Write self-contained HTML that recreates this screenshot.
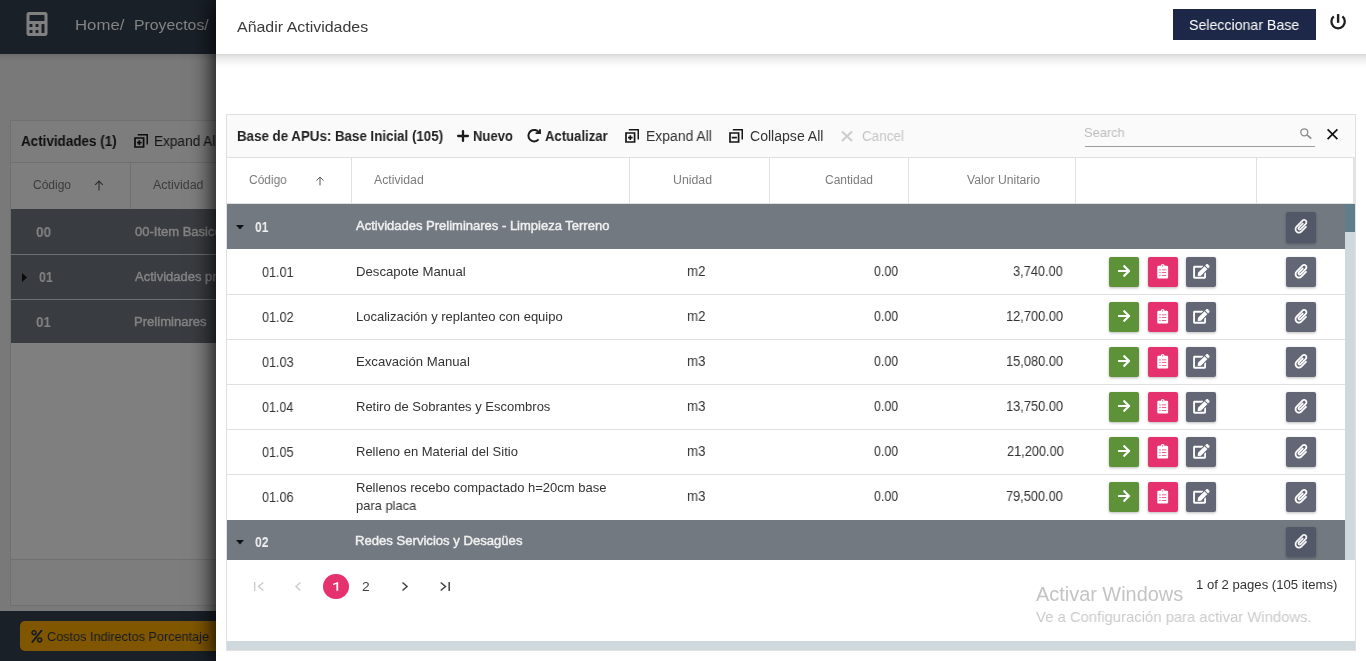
<!DOCTYPE html>
<html lang="es"><head><meta charset="utf-8"><title>Añadir Actividades</title>
<style>
html,body{margin:0;padding:0}
body{width:1366px;height:661px;overflow:hidden;position:relative;background:#797979;font-family:"Liberation Sans",sans-serif}
div,span,svg{position:absolute;box-sizing:border-box}
.t{white-space:nowrap;height:20px;line-height:20px;transform-origin:0 50%;will-change:transform}
.fb{-webkit-text-stroke:0.45px currentColor}
.ic{overflow:visible}
.btn{width:30px;height:30px;border-radius:2px;box-shadow:0 1px 3px rgba(0,0,0,.28)}
.hl{height:1px;background:#e0e0e0}
.vl{width:1px;background:#e0e0e0}
</style></head><body>

<div style="left:0;top:0;width:1366px;height:54px;background:#1a2028"></div>
<div style="left:0;top:54px;width:1366px;height:7px;background:linear-gradient(rgba(0,0,0,.10),rgba(0,0,0,0))"></div>
<svg class="ic" style="left:25.9px;top:12px;width:22px;height:24px;" viewBox="0 0 448 512" preserveAspectRatio="xMidYMid meet"><path fill="#808080" d="M400 0H48C22.4 0 0 22.4 0 48v416c0 25.6 22.4 48 48 48h352c25.6 0 48-22.4 48-48V48c0-25.600-22.400-48-48-48zM128 435.200c0 6.400-6.400 12.800-12.800 12.800H76.800c-6.400 0-12.800-6.400-12.800-12.800v-38.400c0-6.400 6.400-12.800 12.800-12.800h38.400c6.400 0 12.800 6.400 12.800 12.800v38.400zm0-128c0 6.400-6.400 12.800-12.800 12.800H76.800c-6.400 0-12.800-6.400-12.800-12.800v-38.400c0-6.400 6.400-12.800 12.800-12.800h38.400c6.400 0 12.800 6.400 12.800 12.800v38.400zm128 128c0 6.400-6.400 12.800-12.800 12.800h-38.400c-6.400 0-12.800-6.400-12.800-12.800v-38.400c0-6.400 6.400-12.800 12.800-12.800h38.400c6.400 0 12.800 6.400 12.800 12.800v38.400zm0-128c0 6.400-6.400 12.800-12.800 12.800h-38.400c-6.400 0-12.800-6.400-12.800-12.800v-38.400c0-6.400 6.400-12.800 12.800-12.800h38.400c6.400 0 12.800 6.400 12.800 12.800v38.400zm128 128c0 6.400-6.400 12.800-12.800 12.800h-38.400c-6.400 0-12.800-6.400-12.800-12.800V268.800c0-6.400 6.400-12.800 12.800-12.800h38.400c6.400 0 12.800 6.400 12.800 12.800v166.400zm0-256c0 6.400-6.400 12.800-12.800 12.800H76.800c-6.400 0-12.800-6.400-12.800-12.800V76.800C64 70.400 70.400 64 76.800 64h294.400c6.400 0 12.800 6.400 12.800 12.800v102.400z"/></svg>
<div style="left:10px;top:120px;width:400px;height:486px;background:#7d7d7d;border:1px solid #707070"></div>
<div style="left:11px;top:162px;width:400px;height:1px;background:#707070"></div>
<div style="left:11px;top:163px;width:400px;height:46px;background:#7e7e7e"></div>
<div style="left:130px;top:163px;width:1px;height:46px;background:#707070"></div>
<div style="left:11px;top:209px;width:400px;height:134px;background:#393c40"></div>
<div style="left:11px;top:254px;width:400px;height:1px;background:#6d6f72"></div>
<div style="left:11px;top:299px;width:400px;height:1px;background:#6d6f72"></div>
<div style="left:11px;top:343px;width:400px;height:216px;background:#7f7f7f"></div>
<div style="left:11px;top:559px;width:400px;height:1px;background:#707070"></div>
<div style="left:11px;top:560px;width:400px;height:45px;background:#7d7d7d"></div>
<svg class="ic" style="left:133.7px;top:134px;width:14px;height:14px" viewBox="0 0 14 14"><path fill="none" stroke="#0c0c0c" stroke-width="1.700" d="M1 4h8.600v9h-8.600z"/><path fill="none" stroke="#0c0c0c" stroke-width="1.500" d="M3.800 0.750H13.250V10.400"/><path fill="none" stroke="#0c0c0c" stroke-width="1.700" d="M3 8.600h4.600M5.300 6.300v4.600"/></svg>
<svg class="ic" style="left:93.5px;top:180px;width:10px;height:11px" viewBox="0 0 10 11"><path fill="none" stroke="#2e2e2e" stroke-width="1.1" d="M5 10.5V1M1.2 4.8L5 1l3.800 3.800"/></svg>
<svg class="ic" style="left:21.5px;top:273px;width:5px;height:9px" viewBox="0 0 5 9"><path fill="#0a0a0a" d="M0 0l5 4.500L0 9z"/></svg>
<div style="left:0;top:611px;width:1366px;height:50px;background:#1a2028"></div>
<div style="left:20px;top:621px;width:260px;height:30px;background:#805700;border-radius:5px"></div>
<svg class="ic" style="left:31.0px;top:629.5px;width:11.7px;height:12.8px;" viewBox="0 0 448 512" preserveAspectRatio="xMidYMid meet"><path fill="#161c26" d="M112 224c61.900 0 112-50.100 112-112S173.900 0 112 0 0 50.100 0 112s50.100 112 112 112zm0-160c26.500 0 48 21.500 48 48s-21.500 48-48 48-48-21.500-48-48 21.500-48 48-48zm224 224c-61.900 0-112 50.100-112 112s50.100 112 112 112 112-50.100 112-112-50.100-112-112-112zm0 160c-26.500 0-48-21.500-48-48s21.500-48 48-48 48 21.500 48 48-21.500 48-48 48zM392.300.2l31.600-.1c19.400-.1 30.900 21.800 19.700 37.800L77.400 501.600a23.950 23.950 0 0 1-19.600 10.200l-33.400.1c-19.500 0-30.900-21.900-19.700-37.800l368-463.700C377.200 4 384.500.2 392.300.2z"/></svg>
<span class="t" style="left:74.62px;top:15.3px;font-size:15px;color:#838383;transform:scaleX(1.1177)">Home/</span>
<span class="t" style="left:134.10px;top:15.3px;font-size:15px;color:#838383;transform:scaleX(1.0540)">Proyectos/</span>
<span class="t" style="left:21.16px;top:131.2px;font-size:14px;color:#0f0f10;font-weight:700;transform:scaleX(0.9600)">Actividades (1)</span>
<span class="t" style="left:154.48px;top:131.2px;font-size:14px;color:#141414;transform:scaleX(0.9730)">Expand All</span>
<span class="t" style="left:32.51px;top:175.0px;font-size:12px;color:#3c3c3c">Código</span>
<span class="t" style="left:152.87px;top:175.0px;font-size:12px;color:#3c3c3c;transform:scaleX(1.0366)">Actividad</span>
<span class="t" style="left:35.90px;top:222.0px;font-size:14px;color:#838383;font-weight:700;transform:scaleX(0.9667)">00</span>
<span class="t fb" style="left:135.09px;top:221.5px;font-size:13px;color:#838383">00-Item Basico</span>
<span class="t" style="left:39.14px;top:267.0px;font-size:14px;color:#838383;font-weight:700;transform:scaleX(0.8877)">01</span>
<span class="t fb" style="left:135.30px;top:266.5px;font-size:13px;color:#838383">Actividades preliminares</span>
<span class="t" style="left:35.91px;top:312.0px;font-size:14px;color:#838383;font-weight:700;transform:scaleX(0.9560)">01</span>
<span class="t fb" style="left:134.48px;top:311.5px;font-size:13px;color:#838383;transform:scaleX(1.0049)">Preliminares</span>
<span class="t" style="left:46.86px;top:626.5px;font-size:13px;color:#161c26;transform:scaleX(0.9749)">Costos Indirectos Porcentaje</span>
<div style="left:216px;top:0;width:1150px;height:661px;background:#fff;box-shadow:0 0 22px 2px rgba(0,0,0,.95)"></div>
<div style="left:216px;top:54px;width:1150px;height:14px;background:linear-gradient(#d9d9d9,#e5e5e5 18%,#f2f2f2 48%,#fbfbfb 78%,#fff)"></div>
<div style="left:1173px;top:9px;width:143px;height:31px;background:#1d2747"></div>
<svg class="ic" style="left:1330px;top:14px;width:16px;height:16px" viewBox="0 0 16 16"><path fill="none" stroke="#1e1e1e" stroke-width="2.250" d="M3.790 2.470A6.700 6.700 0 1 0 12.410 2.470"/><path fill="none" stroke="#1e1e1e" stroke-width="2.400" d="M8.100 0.100V8.850"/></svg>
<div style="left:226px;top:114px;width:1130px;height:537px;border:1px solid #e0e0e0;background:#fff"></div>
<div style="left:227px;top:115px;width:1128px;height:42px;background:#fafafa"></div>
<div class="hl" style="left:227px;top:157px;width:1128px"></div>
<div class="hl" style="left:227px;top:203px;width:1128px"></div>
<div style="left:1353px;top:158px;width:3px;height:45px;background:#e3e3e3"></div>
<div class="vl" style="left:351px;top:158px;height:45px"></div>
<div class="vl" style="left:629px;top:158px;height:45px"></div>
<div class="vl" style="left:769px;top:158px;height:45px"></div>
<div class="vl" style="left:908px;top:158px;height:45px"></div>
<div class="vl" style="left:1075px;top:158px;height:45px"></div>
<div class="vl" style="left:1256px;top:158px;height:45px"></div>
<div style="left:227px;top:204px;width:1118px;height:45px;background:#727981"></div>
<div style="left:227px;top:520px;width:1118px;height:40px;background:#727981;overflow:hidden"><div class="btn" style="left:1059px;top:7px;background:#525868"></div></div>
<div class="hl" style="left:227px;top:294px;width:1118px"></div>
<div class="hl" style="left:227px;top:339px;width:1118px"></div>
<div class="hl" style="left:227px;top:384px;width:1118px"></div>
<div class="hl" style="left:227px;top:429px;width:1118px"></div>
<div class="hl" style="left:227px;top:474px;width:1118px"></div>
<div style="left:1345px;top:204px;width:10px;height:356px;background:#cfd8dc"></div>
<div style="left:1345px;top:204px;width:10px;height:28px;background:#607d8b"></div>
<div style="left:227px;top:641px;width:1128px;height:9px;background:#cfd8dc"></div>
<svg class="ic" style="left:236px;top:224.5px;width:8px;height:4.500px" viewBox="0 0 8 4.5"><path fill="#111" d="M0 0h8L4 4.500z"/></svg>
<svg class="ic" style="left:236px;top:539.5px;width:8px;height:4.500px" viewBox="0 0 8 4.5"><path fill="#111" d="M0 0h8L4 4.500z"/></svg>
<svg class="ic" style="left:457px;top:130px;width:12px;height:12px" viewBox="0 0 12 12"><path fill="none" stroke="#1c1c1c" stroke-width="2.300" stroke-linecap="round" d="M6 1.100v9.800M1.100 6h9.800"/></svg>
<svg class="ic" style="left:527px;top:129px;width:14px;height:14px" viewBox="0 0 14 14"><path fill="none" stroke="#1c1c1c" stroke-width="2" d="M12.130 3.830A5.750 5.750 0 1 0 11.550 10.400"/><path fill="none" stroke="#1c1c1c" stroke-width="1.900" d="M8.600 4.100H13V0.300"/></svg>
<svg class="ic" style="left:625px;top:129px;width:14px;height:14px" viewBox="0 0 14 14"><path fill="none" stroke="#161616" stroke-width="1.700" d="M1 4h8.600v9h-8.600z"/><path fill="none" stroke="#161616" stroke-width="1.500" d="M3.800 0.750H13.250V10.400"/><path fill="none" stroke="#161616" stroke-width="1.700" d="M3 8.600h4.600M5.300 6.300v4.600"/></svg>
<svg class="ic" style="left:729px;top:129px;width:14px;height:14px" viewBox="0 0 14 14"><path fill="none" stroke="#161616" stroke-width="1.700" d="M1 4h8.600v9h-8.600z"/><path fill="none" stroke="#161616" stroke-width="1.500" d="M3.800 0.750H13.250V10.400"/><path fill="none" stroke="#161616" stroke-width="1.700" d="M2.700 8.600h5.200"/></svg>
<svg class="ic" style="left:840.5px;top:131px;width:12px;height:10.500px" viewBox="0 0 12 10.5"><path fill="none" stroke="#cdcdcd" stroke-width="2.200" d="M0.900 0.500l10.200 9.500M11.100 0.500L0.900 10"/></svg>
<div style="left:1085px;top:146px;width:230px;height:1px;background:#9e9e9e"></div>
<svg class="ic" style="left:1299.500px;top:127.500px;width:12px;height:11px" viewBox="0 0 12 11"><circle cx="4.300" cy="4.300" r="3.500" fill="none" stroke="#8a8a8a" stroke-width="1.300"/><path stroke="#8a8a8a" stroke-width="1.500" d="M6.900 6.900L11.300 10.600"/></svg>
<svg class="ic" style="left:1326.500px;top:129px;width:11px;height:10.500px" viewBox="0 0 11 10.5"><path fill="none" stroke="#111" stroke-width="1.700" d="M0.600 0.400l9.800 9.700M10.400 0.400L0.600 10.100"/></svg>
<svg class="ic" style="left:314.500px;top:176.200px;width:10px;height:10px" viewBox="0 0 10 10"><path fill="none" stroke="#5a5a5a" stroke-width="1" d="M5 9.400V1M1.500 4.500L5 1l3.500 3.500"/></svg>
<div class="btn" style="left:1286px;top:212px;height:30.500px;background:#525868"></div>
<svg class="ic" style="left:1294.2px;top:218.8px;width:14px;height:14.5px;" viewBox="0 0 448 512" preserveAspectRatio="xMidYMid meet"><path fill="#f4f4f4" d="M43.246 466.142c-58.430-60.289-57.341-157.511 1.386-217.581L254.392 34c44.316-45.332 116.351-45.336 160.671 0 43.890 44.894 43.943 117.329 0 162.276L232.214 383.128c-29.855 30.537-78.633 30.111-107.982-.998-28.275-29.970-27.368-77.473 1.452-106.953l143.743-146.835c6.182-6.314 16.312-6.422 22.626-.241l22.861 22.379c6.315 6.182 6.422 16.312.241 22.626L171.427 319.927c-4.932 5.045-5.236 13.428-.648 18.292 4.372 4.634 11.245 4.711 15.688.165l182.849-186.851c19.613-20.062 19.613-52.725-.011-72.798-19.189-19.627-49.957-19.637-69.154 0L90.390 293.295c-34.763 35.560-35.299 93.120-1.191 128.313 34.010 35.093 88.985 35.137 123.058.286l172.060-175.999c6.177-6.319 16.307-6.433 22.626-.256l22.877 22.364c6.319 6.177 6.434 16.307.256 22.626l-172.060 175.998c-59.576 60.938-155.943 60.216-214.770-.485z"/></svg>
<svg class="ic" style="left:1294.2px;top:533.8px;width:14px;height:14.5px;" viewBox="0 0 448 512" preserveAspectRatio="xMidYMid meet"><path fill="#f4f4f4" d="M43.246 466.142c-58.430-60.289-57.341-157.511 1.386-217.581L254.392 34c44.316-45.332 116.351-45.336 160.671 0 43.890 44.894 43.943 117.329 0 162.276L232.214 383.128c-29.855 30.537-78.633 30.111-107.982-.998-28.275-29.970-27.368-77.473 1.452-106.953l143.743-146.835c6.182-6.314 16.312-6.422 22.626-.241l22.861 22.379c6.315 6.182 6.422 16.312.241 22.626L171.427 319.927c-4.932 5.045-5.236 13.428-.648 18.292 4.372 4.634 11.245 4.711 15.688.165l182.849-186.851c19.613-20.062 19.613-52.725-.011-72.798-19.189-19.627-49.957-19.637-69.154 0L90.390 293.295c-34.763 35.560-35.299 93.120-1.191 128.313 34.010 35.093 88.985 35.137 123.058.286l172.060-175.999c6.177-6.319 16.307-6.433 22.626-.256l22.877 22.364c6.319 6.177 6.434 16.307.256 22.626l-172.060 175.998c-59.576 60.938-155.943 60.216-214.770-.485z"/></svg>
<div class="btn" style="left:1109px;top:257px;background:#5d9239"></div>
<svg class="ic" style="left:1117.85px;top:263.8px;width:12.3px;height:14px;" viewBox="0 0 448 512" preserveAspectRatio="xMidYMid meet"><path fill="#fff" d="M190.5 66.9l22.2-22.2c9.4-9.4 24.6-9.4 33.900 0L441 239c9.400 9.400 9.400 24.600 0 33.900L246.600 467.300c-9.400 9.400-24.600 9.400-33.900 0l-22.200-22.200c-9.500-9.500-9.300-25 .4-34.300L311.400 296H24c-13.300 0-24-10.700-24-24v-32c0-13.300 10.700-24 24-24h287.400L190.900 101.200c-9.800-9.300-10-24.800-.4-34.300z"/></svg>
<div class="btn" style="left:1148px;top:257px;background:#e6316f"></div>
<svg class="ic" style="left:1157.2px;top:263.6px;width:11.4px;height:14.5px;" viewBox="0 0 384 512" preserveAspectRatio="xMidYMid meet"><path fill="#fff" d="M336 64h-80c0-35.300-28.700-64-64-64s-64 28.700-64 64H48C21.500 64 0 85.500 0 112v352c0 26.500 21.500 48 48 48h288c26.500 0 48-21.500 48-48V112c0-26.500-21.500-48-48-48zM96 424c-13.300 0-24-10.700-24-24s10.700-24 24-24 24 10.700 24 24-10.700 24-24 24zm0-96c-13.300 0-24-10.700-24-24s10.700-24 24-24 24 10.700 24 24-10.700 24-24 24zm0-96c-13.300 0-24-10.700-24-24s10.700-24 24-24 24 10.700 24 24-10.700 24-24 24zm96-192c13.300 0 24 10.700 24 24s-10.700 24-24 24-24-10.700-24-24 10.700-24 24-24zm128 368c0 4.400-3.600 8-8 8H168c-4.400 0-8-3.600-8-8v-16c0-4.400 3.600-8 8-8h144c4.400 0 8 3.600 8 8v16zm0-96c0 4.400-3.600 8-8 8H168c-4.400 0-8-3.600-8-8v-16c0-4.400 3.600-8 8-8h144c4.400 0 8 3.600 8 8v16zm0-96c0 4.400-3.600 8-8 8H168c-4.400 0-8-3.600-8-8v-16c0-4.400 3.600-8 8-8h144c4.400 0 8 3.600 8 8v16z"/></svg>
<div class="btn" style="left:1186px;top:257px;background:#636775"></div>
<svg class="ic" style="left:1193.2px;top:263.6px;width:16.8px;height:14.7px;" viewBox="0 0 576 512" preserveAspectRatio="xMidYMid meet"><path fill="#fff" d="M402.6 83.2l90.2 90.2c3.800 3.800 3.800 10 0 13.800L274.400 405.600l-92.800 10.300c-12.400 1.400-22.900-9.100-21.500-21.500l10.300-92.800L388.800 83.200c3.800-3.800 10-3.800 13.800 0zm162-22.900l-48.800-48.800c-15.200-15.200-39.900-15.200-55.200 0l-35.400 35.400c-3.800 3.800-3.800 10 0 13.800l90.200 90.200c3.800 3.800 10 3.800 13.800 0l35.400-35.400c15.200-15.300 15.200-40 0-55.200zM384 346.200V448H64V128h229.800c3.200 0 6.200-1.300 8.500-3.500l40-40c7.600-7.600 2.200-20.500-8.500-20.500H48C21.500 64 0 85.500 0 112v352c0 26.500 21.500 48 48 48h352c26.500 0 48-21.500 48-48V306.200c0-10.700-12.900-16-20.500-8.500l-40 40c-2.200 2.300-3.500 5.300-3.500 8.500z"/></svg>
<div class="btn" style="left:1286px;top:257px;background:#636775"></div>
<svg class="ic" style="left:1294.2px;top:263.6px;width:14px;height:14.5px;" viewBox="0 0 448 512" preserveAspectRatio="xMidYMid meet"><path fill="#fff" d="M43.246 466.142c-58.430-60.289-57.341-157.511 1.386-217.581L254.392 34c44.316-45.332 116.351-45.336 160.671 0 43.890 44.894 43.943 117.329 0 162.276L232.214 383.128c-29.855 30.537-78.633 30.111-107.982-.998-28.275-29.970-27.368-77.473 1.452-106.953l143.743-146.835c6.182-6.314 16.312-6.422 22.626-.241l22.861 22.379c6.315 6.182 6.422 16.312.241 22.626L171.427 319.927c-4.932 5.045-5.236 13.428-.648 18.292 4.372 4.634 11.245 4.711 15.688.165l182.849-186.851c19.613-20.062 19.613-52.725-.011-72.798-19.189-19.627-49.957-19.637-69.154 0L90.390 293.295c-34.763 35.560-35.299 93.120-1.191 128.313 34.010 35.093 88.985 35.137 123.058.286l172.060-175.999c6.177-6.319 16.307-6.433 22.626-.256l22.877 22.364c6.319 6.177 6.434 16.307.256 22.626l-172.060 175.998c-59.576 60.938-155.943 60.216-214.770-.485z"/></svg>
<div class="btn" style="left:1109px;top:302px;background:#5d9239"></div>
<svg class="ic" style="left:1117.85px;top:308.8px;width:12.3px;height:14px;" viewBox="0 0 448 512" preserveAspectRatio="xMidYMid meet"><path fill="#fff" d="M190.5 66.9l22.2-22.2c9.4-9.4 24.6-9.4 33.900 0L441 239c9.400 9.400 9.400 24.600 0 33.900L246.600 467.300c-9.400 9.400-24.600 9.400-33.900 0l-22.200-22.200c-9.500-9.500-9.300-25 .4-34.300L311.400 296H24c-13.300 0-24-10.700-24-24v-32c0-13.300 10.700-24 24-24h287.400L190.900 101.200c-9.800-9.300-10-24.800-.4-34.300z"/></svg>
<div class="btn" style="left:1148px;top:302px;background:#e6316f"></div>
<svg class="ic" style="left:1157.2px;top:308.6px;width:11.4px;height:14.5px;" viewBox="0 0 384 512" preserveAspectRatio="xMidYMid meet"><path fill="#fff" d="M336 64h-80c0-35.300-28.700-64-64-64s-64 28.700-64 64H48C21.500 64 0 85.500 0 112v352c0 26.500 21.500 48 48 48h288c26.500 0 48-21.500 48-48V112c0-26.500-21.500-48-48-48zM96 424c-13.300 0-24-10.700-24-24s10.700-24 24-24 24 10.700 24 24-10.700 24-24 24zm0-96c-13.300 0-24-10.700-24-24s10.700-24 24-24 24 10.700 24 24-10.700 24-24 24zm0-96c-13.300 0-24-10.700-24-24s10.700-24 24-24 24 10.700 24 24-10.700 24-24 24zm96-192c13.300 0 24 10.700 24 24s-10.700 24-24 24-24-10.700-24-24 10.700-24 24-24zm128 368c0 4.400-3.600 8-8 8H168c-4.400 0-8-3.600-8-8v-16c0-4.400 3.600-8 8-8h144c4.400 0 8 3.600 8 8v16zm0-96c0 4.400-3.600 8-8 8H168c-4.400 0-8-3.600-8-8v-16c0-4.400 3.600-8 8-8h144c4.400 0 8 3.600 8 8v16zm0-96c0 4.400-3.600 8-8 8H168c-4.400 0-8-3.600-8-8v-16c0-4.400 3.600-8 8-8h144c4.400 0 8 3.600 8 8v16z"/></svg>
<div class="btn" style="left:1186px;top:302px;background:#636775"></div>
<svg class="ic" style="left:1193.2px;top:308.6px;width:16.8px;height:14.7px;" viewBox="0 0 576 512" preserveAspectRatio="xMidYMid meet"><path fill="#fff" d="M402.6 83.2l90.2 90.2c3.800 3.800 3.800 10 0 13.800L274.400 405.600l-92.800 10.300c-12.400 1.400-22.900-9.100-21.500-21.500l10.300-92.800L388.800 83.200c3.800-3.800 10-3.800 13.800 0zm162-22.900l-48.800-48.800c-15.200-15.200-39.900-15.200-55.200 0l-35.400 35.400c-3.800 3.800-3.800 10 0 13.800l90.200 90.200c3.800 3.800 10 3.800 13.800 0l35.400-35.400c15.200-15.300 15.200-40 0-55.200zM384 346.200V448H64V128h229.800c3.200 0 6.200-1.300 8.500-3.500l40-40c7.600-7.600 2.200-20.500-8.500-20.500H48C21.500 64 0 85.500 0 112v352c0 26.500 21.500 48 48 48h352c26.500 0 48-21.500 48-48V306.200c0-10.700-12.900-16-20.500-8.500l-40 40c-2.200 2.300-3.500 5.300-3.500 8.500z"/></svg>
<div class="btn" style="left:1286px;top:302px;background:#636775"></div>
<svg class="ic" style="left:1294.2px;top:308.6px;width:14px;height:14.5px;" viewBox="0 0 448 512" preserveAspectRatio="xMidYMid meet"><path fill="#fff" d="M43.246 466.142c-58.430-60.289-57.341-157.511 1.386-217.581L254.392 34c44.316-45.332 116.351-45.336 160.671 0 43.890 44.894 43.943 117.329 0 162.276L232.214 383.128c-29.855 30.537-78.633 30.111-107.982-.998-28.275-29.970-27.368-77.473 1.452-106.953l143.743-146.835c6.182-6.314 16.312-6.422 22.626-.241l22.861 22.379c6.315 6.182 6.422 16.312.241 22.626L171.427 319.927c-4.932 5.045-5.236 13.428-.648 18.292 4.372 4.634 11.245 4.711 15.688.165l182.849-186.851c19.613-20.062 19.613-52.725-.011-72.798-19.189-19.627-49.957-19.637-69.154 0L90.390 293.295c-34.763 35.560-35.299 93.120-1.191 128.313 34.010 35.093 88.985 35.137 123.058.286l172.060-175.999c6.177-6.319 16.307-6.433 22.626-.256l22.877 22.364c6.319 6.177 6.434 16.307.256 22.626l-172.060 175.998c-59.576 60.938-155.943 60.216-214.770-.485z"/></svg>
<div class="btn" style="left:1109px;top:347px;background:#5d9239"></div>
<svg class="ic" style="left:1117.85px;top:353.8px;width:12.3px;height:14px;" viewBox="0 0 448 512" preserveAspectRatio="xMidYMid meet"><path fill="#fff" d="M190.5 66.9l22.2-22.2c9.4-9.4 24.6-9.4 33.900 0L441 239c9.400 9.400 9.400 24.600 0 33.900L246.600 467.300c-9.400 9.400-24.600 9.400-33.900 0l-22.200-22.200c-9.500-9.500-9.300-25 .4-34.300L311.400 296H24c-13.300 0-24-10.700-24-24v-32c0-13.300 10.700-24 24-24h287.400L190.900 101.200c-9.800-9.300-10-24.800-.4-34.300z"/></svg>
<div class="btn" style="left:1148px;top:347px;background:#e6316f"></div>
<svg class="ic" style="left:1157.2px;top:353.6px;width:11.4px;height:14.5px;" viewBox="0 0 384 512" preserveAspectRatio="xMidYMid meet"><path fill="#fff" d="M336 64h-80c0-35.300-28.700-64-64-64s-64 28.700-64 64H48C21.500 64 0 85.500 0 112v352c0 26.500 21.500 48 48 48h288c26.500 0 48-21.500 48-48V112c0-26.500-21.500-48-48-48zM96 424c-13.300 0-24-10.700-24-24s10.700-24 24-24 24 10.700 24 24-10.700 24-24 24zm0-96c-13.300 0-24-10.700-24-24s10.700-24 24-24 24 10.700 24 24-10.700 24-24 24zm0-96c-13.300 0-24-10.700-24-24s10.700-24 24-24 24 10.700 24 24-10.700 24-24 24zm96-192c13.300 0 24 10.700 24 24s-10.700 24-24 24-24-10.700-24-24 10.700-24 24-24zm128 368c0 4.400-3.600 8-8 8H168c-4.400 0-8-3.600-8-8v-16c0-4.400 3.600-8 8-8h144c4.400 0 8 3.600 8 8v16zm0-96c0 4.400-3.600 8-8 8H168c-4.400 0-8-3.600-8-8v-16c0-4.400 3.600-8 8-8h144c4.400 0 8 3.600 8 8v16zm0-96c0 4.400-3.600 8-8 8H168c-4.400 0-8-3.600-8-8v-16c0-4.400 3.600-8 8-8h144c4.400 0 8 3.600 8 8v16z"/></svg>
<div class="btn" style="left:1186px;top:347px;background:#636775"></div>
<svg class="ic" style="left:1193.2px;top:353.6px;width:16.8px;height:14.7px;" viewBox="0 0 576 512" preserveAspectRatio="xMidYMid meet"><path fill="#fff" d="M402.6 83.2l90.2 90.2c3.800 3.800 3.800 10 0 13.800L274.400 405.600l-92.800 10.300c-12.400 1.400-22.900-9.100-21.500-21.500l10.300-92.800L388.800 83.200c3.800-3.800 10-3.800 13.800 0zm162-22.900l-48.800-48.800c-15.200-15.200-39.900-15.200-55.200 0l-35.400 35.400c-3.800 3.800-3.800 10 0 13.800l90.200 90.200c3.800 3.800 10 3.800 13.800 0l35.400-35.400c15.200-15.300 15.200-40 0-55.200zM384 346.200V448H64V128h229.800c3.200 0 6.200-1.300 8.500-3.500l40-40c7.600-7.600 2.200-20.500-8.500-20.500H48C21.500 64 0 85.500 0 112v352c0 26.500 21.500 48 48 48h352c26.500 0 48-21.500 48-48V306.200c0-10.700-12.900-16-20.500-8.500l-40 40c-2.200 2.300-3.500 5.300-3.500 8.500z"/></svg>
<div class="btn" style="left:1286px;top:347px;background:#636775"></div>
<svg class="ic" style="left:1294.2px;top:353.6px;width:14px;height:14.5px;" viewBox="0 0 448 512" preserveAspectRatio="xMidYMid meet"><path fill="#fff" d="M43.246 466.142c-58.430-60.289-57.341-157.511 1.386-217.581L254.392 34c44.316-45.332 116.351-45.336 160.671 0 43.890 44.894 43.943 117.329 0 162.276L232.214 383.128c-29.855 30.537-78.633 30.111-107.982-.998-28.275-29.970-27.368-77.473 1.452-106.953l143.743-146.835c6.182-6.314 16.312-6.422 22.626-.241l22.861 22.379c6.315 6.182 6.422 16.312.241 22.626L171.427 319.927c-4.932 5.045-5.236 13.428-.648 18.292 4.372 4.634 11.245 4.711 15.688.165l182.849-186.851c19.613-20.062 19.613-52.725-.011-72.798-19.189-19.627-49.957-19.637-69.154 0L90.390 293.295c-34.763 35.560-35.299 93.120-1.191 128.313 34.010 35.093 88.985 35.137 123.058.286l172.060-175.999c6.177-6.319 16.307-6.433 22.626-.256l22.877 22.364c6.319 6.177 6.434 16.307.256 22.626l-172.060 175.998c-59.576 60.938-155.943 60.216-214.770-.485z"/></svg>
<div class="btn" style="left:1109px;top:392px;background:#5d9239"></div>
<svg class="ic" style="left:1117.85px;top:398.8px;width:12.3px;height:14px;" viewBox="0 0 448 512" preserveAspectRatio="xMidYMid meet"><path fill="#fff" d="M190.5 66.9l22.2-22.2c9.4-9.4 24.6-9.4 33.900 0L441 239c9.400 9.400 9.400 24.600 0 33.900L246.600 467.300c-9.400 9.400-24.600 9.400-33.900 0l-22.200-22.200c-9.500-9.500-9.300-25 .4-34.300L311.400 296H24c-13.300 0-24-10.700-24-24v-32c0-13.300 10.700-24 24-24h287.400L190.900 101.200c-9.800-9.300-10-24.800-.4-34.300z"/></svg>
<div class="btn" style="left:1148px;top:392px;background:#e6316f"></div>
<svg class="ic" style="left:1157.2px;top:398.6px;width:11.4px;height:14.5px;" viewBox="0 0 384 512" preserveAspectRatio="xMidYMid meet"><path fill="#fff" d="M336 64h-80c0-35.300-28.700-64-64-64s-64 28.700-64 64H48C21.500 64 0 85.500 0 112v352c0 26.500 21.500 48 48 48h288c26.500 0 48-21.500 48-48V112c0-26.500-21.500-48-48-48zM96 424c-13.300 0-24-10.700-24-24s10.700-24 24-24 24 10.700 24 24-10.700 24-24 24zm0-96c-13.300 0-24-10.700-24-24s10.700-24 24-24 24 10.700 24 24-10.700 24-24 24zm0-96c-13.300 0-24-10.700-24-24s10.700-24 24-24 24 10.700 24 24-10.700 24-24 24zm96-192c13.300 0 24 10.700 24 24s-10.700 24-24 24-24-10.700-24-24 10.700-24 24-24zm128 368c0 4.400-3.600 8-8 8H168c-4.400 0-8-3.600-8-8v-16c0-4.400 3.600-8 8-8h144c4.400 0 8 3.600 8 8v16zm0-96c0 4.400-3.600 8-8 8H168c-4.400 0-8-3.600-8-8v-16c0-4.400 3.600-8 8-8h144c4.400 0 8 3.600 8 8v16zm0-96c0 4.400-3.600 8-8 8H168c-4.400 0-8-3.600-8-8v-16c0-4.400 3.600-8 8-8h144c4.400 0 8 3.600 8 8v16z"/></svg>
<div class="btn" style="left:1186px;top:392px;background:#636775"></div>
<svg class="ic" style="left:1193.2px;top:398.6px;width:16.8px;height:14.7px;" viewBox="0 0 576 512" preserveAspectRatio="xMidYMid meet"><path fill="#fff" d="M402.6 83.2l90.2 90.2c3.800 3.800 3.800 10 0 13.800L274.400 405.600l-92.800 10.300c-12.400 1.400-22.900-9.100-21.500-21.500l10.300-92.800L388.800 83.200c3.800-3.800 10-3.800 13.800 0zm162-22.900l-48.800-48.800c-15.200-15.200-39.900-15.200-55.200 0l-35.400 35.400c-3.800 3.800-3.800 10 0 13.800l90.200 90.200c3.800 3.800 10 3.800 13.800 0l35.400-35.400c15.200-15.300 15.200-40 0-55.200zM384 346.200V448H64V128h229.800c3.200 0 6.200-1.300 8.500-3.500l40-40c7.600-7.600 2.200-20.500-8.500-20.500H48C21.500 64 0 85.500 0 112v352c0 26.500 21.500 48 48 48h352c26.500 0 48-21.500 48-48V306.200c0-10.700-12.900-16-20.500-8.500l-40 40c-2.200 2.300-3.500 5.300-3.500 8.500z"/></svg>
<div class="btn" style="left:1286px;top:392px;background:#636775"></div>
<svg class="ic" style="left:1294.2px;top:398.6px;width:14px;height:14.5px;" viewBox="0 0 448 512" preserveAspectRatio="xMidYMid meet"><path fill="#fff" d="M43.246 466.142c-58.430-60.289-57.341-157.511 1.386-217.581L254.392 34c44.316-45.332 116.351-45.336 160.671 0 43.890 44.894 43.943 117.329 0 162.276L232.214 383.128c-29.855 30.537-78.633 30.111-107.982-.998-28.275-29.970-27.368-77.473 1.452-106.953l143.743-146.835c6.182-6.314 16.312-6.422 22.626-.241l22.861 22.379c6.315 6.182 6.422 16.312.241 22.626L171.427 319.927c-4.932 5.045-5.236 13.428-.648 18.292 4.372 4.634 11.245 4.711 15.688.165l182.849-186.851c19.613-20.062 19.613-52.725-.011-72.798-19.189-19.627-49.957-19.637-69.154 0L90.390 293.295c-34.763 35.560-35.299 93.120-1.191 128.313 34.010 35.093 88.985 35.137 123.058.286l172.060-175.999c6.177-6.319 16.307-6.433 22.626-.256l22.877 22.364c6.319 6.177 6.434 16.307.256 22.626l-172.060 175.998c-59.576 60.938-155.943 60.216-214.770-.485z"/></svg>
<div class="btn" style="left:1109px;top:437px;background:#5d9239"></div>
<svg class="ic" style="left:1117.85px;top:443.8px;width:12.3px;height:14px;" viewBox="0 0 448 512" preserveAspectRatio="xMidYMid meet"><path fill="#fff" d="M190.5 66.9l22.2-22.2c9.4-9.4 24.6-9.4 33.900 0L441 239c9.400 9.400 9.400 24.600 0 33.900L246.600 467.300c-9.400 9.400-24.600 9.400-33.900 0l-22.200-22.200c-9.500-9.500-9.300-25 .4-34.300L311.400 296H24c-13.300 0-24-10.700-24-24v-32c0-13.300 10.700-24 24-24h287.400L190.900 101.200c-9.800-9.300-10-24.800-.4-34.300z"/></svg>
<div class="btn" style="left:1148px;top:437px;background:#e6316f"></div>
<svg class="ic" style="left:1157.2px;top:443.6px;width:11.4px;height:14.5px;" viewBox="0 0 384 512" preserveAspectRatio="xMidYMid meet"><path fill="#fff" d="M336 64h-80c0-35.300-28.700-64-64-64s-64 28.700-64 64H48C21.500 64 0 85.500 0 112v352c0 26.500 21.500 48 48 48h288c26.500 0 48-21.500 48-48V112c0-26.500-21.500-48-48-48zM96 424c-13.300 0-24-10.700-24-24s10.700-24 24-24 24 10.700 24 24-10.700 24-24 24zm0-96c-13.300 0-24-10.700-24-24s10.700-24 24-24 24 10.700 24 24-10.700 24-24 24zm0-96c-13.300 0-24-10.700-24-24s10.700-24 24-24 24 10.700 24 24-10.700 24-24 24zm96-192c13.300 0 24 10.700 24 24s-10.700 24-24 24-24-10.700-24-24 10.700-24 24-24zm128 368c0 4.400-3.600 8-8 8H168c-4.400 0-8-3.600-8-8v-16c0-4.400 3.600-8 8-8h144c4.400 0 8 3.600 8 8v16zm0-96c0 4.400-3.600 8-8 8H168c-4.400 0-8-3.600-8-8v-16c0-4.400 3.600-8 8-8h144c4.400 0 8 3.600 8 8v16zm0-96c0 4.400-3.600 8-8 8H168c-4.400 0-8-3.600-8-8v-16c0-4.400 3.600-8 8-8h144c4.400 0 8 3.600 8 8v16z"/></svg>
<div class="btn" style="left:1186px;top:437px;background:#636775"></div>
<svg class="ic" style="left:1193.2px;top:443.6px;width:16.8px;height:14.7px;" viewBox="0 0 576 512" preserveAspectRatio="xMidYMid meet"><path fill="#fff" d="M402.6 83.2l90.2 90.2c3.800 3.800 3.800 10 0 13.800L274.400 405.600l-92.800 10.300c-12.400 1.400-22.900-9.100-21.500-21.500l10.300-92.800L388.800 83.200c3.800-3.800 10-3.800 13.800 0zm162-22.900l-48.800-48.800c-15.200-15.200-39.900-15.200-55.200 0l-35.400 35.400c-3.800 3.800-3.800 10 0 13.800l90.200 90.200c3.800 3.800 10 3.800 13.800 0l35.400-35.400c15.200-15.300 15.200-40 0-55.200zM384 346.200V448H64V128h229.800c3.200 0 6.200-1.300 8.500-3.500l40-40c7.600-7.600 2.200-20.500-8.500-20.500H48C21.500 64 0 85.500 0 112v352c0 26.500 21.500 48 48 48h352c26.500 0 48-21.500 48-48V306.200c0-10.700-12.900-16-20.500-8.500l-40 40c-2.200 2.300-3.500 5.300-3.500 8.500z"/></svg>
<div class="btn" style="left:1286px;top:437px;background:#636775"></div>
<svg class="ic" style="left:1294.2px;top:443.6px;width:14px;height:14.5px;" viewBox="0 0 448 512" preserveAspectRatio="xMidYMid meet"><path fill="#fff" d="M43.246 466.142c-58.430-60.289-57.341-157.511 1.386-217.581L254.392 34c44.316-45.332 116.351-45.336 160.671 0 43.890 44.894 43.943 117.329 0 162.276L232.214 383.128c-29.855 30.537-78.633 30.111-107.982-.998-28.275-29.970-27.368-77.473 1.452-106.953l143.743-146.835c6.182-6.314 16.312-6.422 22.626-.241l22.861 22.379c6.315 6.182 6.422 16.312.241 22.626L171.427 319.927c-4.932 5.045-5.236 13.428-.648 18.292 4.372 4.634 11.245 4.711 15.688.165l182.849-186.851c19.613-20.062 19.613-52.725-.011-72.798-19.189-19.627-49.957-19.637-69.154 0L90.390 293.295c-34.763 35.560-35.299 93.120-1.191 128.313 34.010 35.093 88.985 35.137 123.058.286l172.060-175.999c6.177-6.319 16.307-6.433 22.626-.256l22.877 22.364c6.319 6.177 6.434 16.307.256 22.626l-172.060 175.998c-59.576 60.938-155.943 60.216-214.770-.485z"/></svg>
<div class="btn" style="left:1109px;top:482px;background:#5d9239"></div>
<svg class="ic" style="left:1117.85px;top:488.8px;width:12.3px;height:14px;" viewBox="0 0 448 512" preserveAspectRatio="xMidYMid meet"><path fill="#fff" d="M190.5 66.9l22.2-22.2c9.4-9.4 24.6-9.4 33.900 0L441 239c9.400 9.400 9.400 24.600 0 33.900L246.600 467.300c-9.400 9.400-24.600 9.400-33.900 0l-22.200-22.200c-9.500-9.500-9.300-25 .4-34.300L311.400 296H24c-13.300 0-24-10.700-24-24v-32c0-13.300 10.700-24 24-24h287.400L190.900 101.200c-9.800-9.300-10-24.800-.4-34.300z"/></svg>
<div class="btn" style="left:1148px;top:482px;background:#e6316f"></div>
<svg class="ic" style="left:1157.2px;top:488.6px;width:11.4px;height:14.5px;" viewBox="0 0 384 512" preserveAspectRatio="xMidYMid meet"><path fill="#fff" d="M336 64h-80c0-35.300-28.700-64-64-64s-64 28.700-64 64H48C21.500 64 0 85.500 0 112v352c0 26.500 21.500 48 48 48h288c26.500 0 48-21.500 48-48V112c0-26.500-21.500-48-48-48zM96 424c-13.300 0-24-10.700-24-24s10.700-24 24-24 24 10.700 24 24-10.700 24-24 24zm0-96c-13.300 0-24-10.700-24-24s10.700-24 24-24 24 10.700 24 24-10.700 24-24 24zm0-96c-13.300 0-24-10.700-24-24s10.700-24 24-24 24 10.700 24 24-10.700 24-24 24zm96-192c13.300 0 24 10.700 24 24s-10.700 24-24 24-24-10.700-24-24 10.700-24 24-24zm128 368c0 4.400-3.600 8-8 8H168c-4.400 0-8-3.600-8-8v-16c0-4.400 3.600-8 8-8h144c4.400 0 8 3.600 8 8v16zm0-96c0 4.400-3.600 8-8 8H168c-4.400 0-8-3.600-8-8v-16c0-4.400 3.600-8 8-8h144c4.400 0 8 3.600 8 8v16zm0-96c0 4.400-3.600 8-8 8H168c-4.400 0-8-3.600-8-8v-16c0-4.400 3.600-8 8-8h144c4.400 0 8 3.600 8 8v16z"/></svg>
<div class="btn" style="left:1186px;top:482px;background:#636775"></div>
<svg class="ic" style="left:1193.2px;top:488.6px;width:16.8px;height:14.7px;" viewBox="0 0 576 512" preserveAspectRatio="xMidYMid meet"><path fill="#fff" d="M402.6 83.2l90.2 90.2c3.800 3.800 3.800 10 0 13.800L274.400 405.600l-92.800 10.300c-12.400 1.400-22.900-9.100-21.500-21.500l10.300-92.800L388.800 83.200c3.800-3.800 10-3.800 13.800 0zm162-22.900l-48.800-48.800c-15.200-15.200-39.900-15.200-55.200 0l-35.400 35.400c-3.800 3.800-3.800 10 0 13.800l90.200 90.200c3.800 3.800 10 3.800 13.800 0l35.400-35.400c15.200-15.300 15.200-40 0-55.200zM384 346.200V448H64V128h229.800c3.200 0 6.200-1.300 8.500-3.500l40-40c7.600-7.600 2.200-20.500-8.500-20.500H48C21.500 64 0 85.500 0 112v352c0 26.500 21.500 48 48 48h352c26.500 0 48-21.500 48-48V306.200c0-10.700-12.900-16-20.500-8.500l-40 40c-2.200 2.300-3.500 5.300-3.500 8.500z"/></svg>
<div class="btn" style="left:1286px;top:482px;background:#636775"></div>
<svg class="ic" style="left:1294.2px;top:488.6px;width:14px;height:14.5px;" viewBox="0 0 448 512" preserveAspectRatio="xMidYMid meet"><path fill="#fff" d="M43.246 466.142c-58.430-60.289-57.341-157.511 1.386-217.581L254.392 34c44.316-45.332 116.351-45.336 160.671 0 43.890 44.894 43.943 117.329 0 162.276L232.214 383.128c-29.855 30.537-78.633 30.111-107.982-.998-28.275-29.970-27.368-77.473 1.452-106.953l143.743-146.835c6.182-6.314 16.312-6.422 22.626-.241l22.861 22.379c6.315 6.182 6.422 16.312.241 22.626L171.427 319.927c-4.932 5.045-5.236 13.428-.648 18.292 4.372 4.634 11.245 4.711 15.688.165l182.849-186.851c19.613-20.062 19.613-52.725-.011-72.798-19.189-19.627-49.957-19.637-69.154 0L90.390 293.295c-34.763 35.560-35.299 93.120-1.191 128.313 34.010 35.093 88.985 35.137 123.058.286l172.060-175.999c6.177-6.319 16.307-6.433 22.626-.256l22.877 22.364c6.319 6.177 6.434 16.307.256 22.626l-172.060 175.998c-59.576 60.938-155.943 60.216-214.770-.485z"/></svg>
<div style="left:323px;top:573.500px;width:26px;height:25.600px;border-radius:13px;background:#e6316f"></div>
<svg class="ic" style="left:332.900px;top:582.200px;width:5.200px;height:8.800px" viewBox="0 0 5.2 8.8"><path fill="#fff" d="M5.200 0V8.800H3.400V2.050L0.100 3.200V1.700L4.950 0z"/></svg>
<svg class="ic" style="left:253.500px;top:582px;width:10px;height:9px" viewBox="0 0 10 9"><path fill="none" stroke="#c8c8c8" stroke-width="1.300" d="M0.700 0v9M9.300 0.500L4.500 4.500l4.800 4"/></svg>
<svg class="ic" style="left:294.500px;top:582px;width:6px;height:9px" viewBox="0 0 6 9"><path fill="none" stroke="#c8c8c8" stroke-width="1.300" d="M5.500 0.500L0.900 4.500l4.600 4"/></svg>
<svg class="ic" style="left:402px;top:582px;width:6px;height:9px" viewBox="0 0 6 9"><path fill="none" stroke="#444" stroke-width="1.500" d="M0.500 0.500L5.100 4.500l-4.600 4"/></svg>
<svg class="ic" style="left:439.500px;top:582px;width:10px;height:9px" viewBox="0 0 10 9"><path fill="none" stroke="#444" stroke-width="1.500" d="M9.200 0v9M0.700 0.500L5.500 4.500l-4.800 4"/></svg>
<span class="t" style="left:236.74px;top:16.9px;font-size:15px;color:#3a3a3a;transform:scaleX(1.0631)">Añadir Actividades</span>
<span class="t" style="left:1189.46px;top:14.6px;font-size:14.5px;color:#ffffff;transform:scaleX(0.9767)">Seleccionar Base</span>
<span class="t" style="left:237.05px;top:126.0px;font-size:14px;color:#212121;font-weight:700;transform:scaleX(0.9512)">Base de APUs: Base Inicial (105)</span>
<span class="t" style="left:473.07px;top:126.0px;font-size:14px;color:#212121;font-weight:700;transform:scaleX(0.9320)">Nuevo</span>
<span class="t" style="left:545.07px;top:126.0px;font-size:14px;color:#212121;font-weight:700;transform:scaleX(0.9357)">Actualizar</span>
<span class="t" style="left:646.35px;top:126.0px;font-size:14px;color:#333333;transform:scaleX(0.9947)">Expand All</span>
<span class="t" style="left:749.67px;top:126.0px;font-size:14px;color:#333333;transform:scaleX(1.0046)">Collapse All</span>
<span class="t" style="left:861.70px;top:126.0px;font-size:14px;color:#c6c6c6;transform:scaleX(0.9614)">Cancel</span>
<span class="t" style="left:1084.31px;top:122.6px;font-size:13px;color:#bdbdbd;transform:scaleX(0.9863)">Search</span>
<span class="t" style="left:248.61px;top:170.0px;font-size:12px;color:#7b7b7b;transform:scaleX(0.9932)">Código</span>
<span class="t" style="left:374.37px;top:170.0px;font-size:12px;color:#7b7b7b;transform:scaleX(1.0220)">Actividad</span>
<span class="t" style="left:673.17px;top:170.0px;font-size:12px;color:#7b7b7b;transform:scaleX(1.0267)">Unidad</span>
<span class="t" style="left:825.21px;top:170.0px;font-size:12px;color:#7b7b7b">Cantidad</span>
<span class="t" style="left:966.95px;top:170.0px;font-size:12px;color:#7b7b7b;transform:scaleX(1.0154)">Valor Unitario</span>
<span class="t" style="left:255.35px;top:217.0px;font-size:14px;color:#f0f0f0;font-weight:700;transform:scaleX(0.8604)">01</span>
<span class="t fb" style="left:356.10px;top:216.2px;font-size:13px;color:#f0f0f0">Actividades Preliminares - Limpieza Terreno</span>
<span class="t" style="left:255.35px;top:532.0px;font-size:14px;color:#f0f0f0;font-weight:700;transform:scaleX(0.8700)">02</span>
<span class="t fb" style="left:355.28px;top:531.2px;font-size:13px;color:#f0f0f0;transform:scaleX(1.0075)">Redes Servicios y Desagües</span>
<span class="t" style="left:262.41px;top:262.2px;font-size:14px;color:#333333;transform:scaleX(0.9005)">01.01</span>
<span class="t" style="left:355.89px;top:261.5px;font-size:13px;color:#333333;transform:scaleX(1.0115)">Descapote Manual</span>
<span class="t" style="left:687.05px;top:261.0px;font-size:14px;color:#333333;transform:scaleX(0.9482)">m2</span>
<span class="t" style="left:873.52px;top:261.0px;font-size:14px;color:#333333;transform:scaleX(0.8844)">0.00</span>
<span class="t" style="left:1013.49px;top:261.0px;font-size:14px;color:#333333;transform:scaleX(0.9131)">3,740.00</span>
<span class="t" style="left:262.41px;top:307.2px;font-size:14px;color:#333333;transform:scaleX(0.9015)">01.02</span>
<span class="t" style="left:355.90px;top:306.5px;font-size:13px;color:#333333">Localización y replanteo con equipo</span>
<span class="t" style="left:687.05px;top:306.0px;font-size:14px;color:#333333;transform:scaleX(0.9482)">m2</span>
<span class="t" style="left:873.52px;top:306.0px;font-size:14px;color:#333333;transform:scaleX(0.8844)">0.00</span>
<span class="t" style="left:1006.18px;top:306.0px;font-size:14px;color:#333333;transform:scaleX(0.9166)">12,700.00</span>
<span class="t" style="left:262.41px;top:352.2px;font-size:14px;color:#333333;transform:scaleX(0.9012)">01.03</span>
<span class="t" style="left:355.89px;top:351.5px;font-size:13px;color:#333333;transform:scaleX(1.0095)">Excavación Manual</span>
<span class="t" style="left:687.05px;top:351.0px;font-size:14px;color:#333333;transform:scaleX(0.9477)">m3</span>
<span class="t" style="left:873.52px;top:351.0px;font-size:14px;color:#333333;transform:scaleX(0.8844)">0.00</span>
<span class="t" style="left:1006.18px;top:351.0px;font-size:14px;color:#333333;transform:scaleX(0.9166)">15,080.00</span>
<span class="t" style="left:262.42px;top:397.2px;font-size:14px;color:#333333;transform:scaleX(0.8928)">01.04</span>
<span class="t" style="left:355.90px;top:396.5px;font-size:13px;color:#333333">Retiro de Sobrantes y Escombros</span>
<span class="t" style="left:687.05px;top:396.0px;font-size:14px;color:#333333;transform:scaleX(0.9477)">m3</span>
<span class="t" style="left:873.52px;top:396.0px;font-size:14px;color:#333333;transform:scaleX(0.8844)">0.00</span>
<span class="t" style="left:1006.18px;top:396.0px;font-size:14px;color:#333333;transform:scaleX(0.9166)">13,750.00</span>
<span class="t" style="left:262.41px;top:442.2px;font-size:14px;color:#333333;transform:scaleX(0.8989)">01.05</span>
<span class="t" style="left:355.90px;top:441.5px;font-size:13px;color:#333333">Relleno en Material del Sitio</span>
<span class="t" style="left:687.05px;top:441.0px;font-size:14px;color:#333333;transform:scaleX(0.9477)">m3</span>
<span class="t" style="left:873.52px;top:441.0px;font-size:14px;color:#333333;transform:scaleX(0.8844)">0.00</span>
<span class="t" style="left:1006.50px;top:441.0px;font-size:14px;color:#333333;transform:scaleX(0.9115)">21,200.00</span>
<span class="t" style="left:262.41px;top:487.2px;font-size:14px;color:#333333;transform:scaleX(0.8998)">01.06</span>
<span class="t" style="left:687.05px;top:486.0px;font-size:14px;color:#333333;transform:scaleX(0.9477)">m3</span>
<span class="t" style="left:873.52px;top:486.0px;font-size:14px;color:#333333;transform:scaleX(0.8844)">0.00</span>
<span class="t" style="left:1006.48px;top:486.0px;font-size:14px;color:#333333;transform:scaleX(0.9117)">79,500.00</span>
<span class="t" style="left:355.90px;top:477.7px;font-size:13px;color:#333333">Rellenos recebo compactado h=20cm base</span>
<span class="t" style="left:356.16px;top:496.0px;font-size:13px;color:#333333;transform:scaleX(0.9915)">para placa</span>
<span class="t" style="left:362.15px;top:576.6px;font-size:12.5px;color:#444444;transform:scaleX(1.1064)">2</span>
<span class="t" style="left:1196.09px;top:574.8px;font-size:13px;color:#333333;transform:scaleX(1.0090)">1 of 2 pages (105 items)</span>
<span class="t" style="left:1036.16px;top:584.0px;font-size:19.5px;color:#c4c4c4;transform:scaleX(1.0206)">Activar Windows</span>
<span class="t" style="left:1036.12px;top:606.5px;font-size:15px;color:#cacaca;transform:scaleX(0.9898)">Ve a Configuración para activar Windows.</span>
</body></html>
